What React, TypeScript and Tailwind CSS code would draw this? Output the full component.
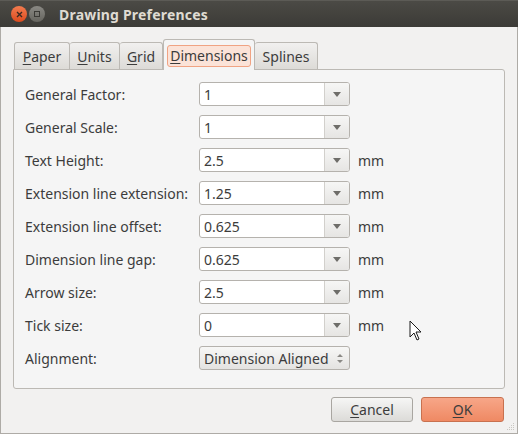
import React from "react";

const rows = [
  { label: "General Factor:", value: "1", unit: false },
  { label: "General Scale:", value: "1", unit: false },
  { label: "Text Height:", value: "2.5", unit: true },
  { label: "Extension line extension:", value: "1.25", unit: true },
  { label: "Extension line offset:", value: "0.625", unit: true },
  { label: "Dimension line gap:", value: "0.625", unit: true },
  { label: "Arrow size:", value: "2.5", unit: true },
  { label: "Tick size:", value: "0", unit: true },
];

function Mn({ c }: { c: string }) {
  return <span className="underline decoration-1 underline-offset-[2px]">{c}</span>;
}

function Combo({ value }: { value: string }) {
  return (
    <div className="flex h-6 w-[151px] overflow-hidden rounded-[3px] border border-[#b5b2ad] bg-white">
      <div className="flex flex-1 items-center pl-[4px] text-[#3c3c3c]">{value}</div>
      <div className="flex w-[25px] items-center justify-center border-l border-[#d2d0cc] bg-gradient-to-b from-[#f6f6f5] to-[#e6e5e3]">
        <svg width="8" height="5" viewBox="0 0 8 5">
          <path d="M0 0h8L4 5z" fill="#6e6d69" />
        </svg>
      </div>
    </div>
  );
}

export default function App() {
  return (
    <div
      className="relative flex h-[434px] w-[518px] flex-col overflow-hidden bg-[#f2f1f0] text-[14px] text-[#3c3c3c]"
      style={{ fontFamily: '"Noto Sans", "DejaVu Sans", sans-serif' }}
    >
      {/* title bar */}
      <div className="flex h-[27px] shrink-0 items-center border-t border-[#5c5b56] bg-gradient-to-b from-[#4b4a45] to-[#3c3b37] pl-[11px]">
        <div className="flex h-4 w-4 items-center justify-center rounded-full bg-gradient-to-b from-[#f27b4e] to-[#dc4a1c]">
          <svg width="7" height="7" viewBox="0 0 7 7">
            <path d="M1 1l5 5M6 1L1 6" stroke="#3a2a22" strokeWidth="1.4" />
          </svg>
        </div>
        <div className="ml-[2px] flex h-4 w-4 items-center justify-center rounded-full bg-gradient-to-b from-[#8a8984] to-[#66655f]">
          <div className="h-[6px] w-[6px] border border-[#3a3935]" />
        </div>
        <div className="ml-[14px] text-[14px] font-bold tracking-[0.2px] text-[#dfdbd2]">Drawing Preferences</div>
      </div>

      <div className="flex flex-1 flex-col border-x border-b border-[#aeaba6] px-[12px]">
        {/* tabs */}
        <div className="mt-[12px] flex h-[30px] items-end pl-px">
          <div className="flex h-[27px] w-[56px] items-center justify-center rounded-t-[3px] border border-b-0 border-[#bcb9b4] bg-gradient-to-b from-[#f1f0ef] to-[#dddbd7]">
            <span><Mn c="P" />aper</span>
          </div>
          <div className="flex h-[27px] w-[50px] items-center justify-center rounded-t-[3px] border border-b-0 border-l-0 border-[#bcb9b4] bg-gradient-to-b from-[#f1f0ef] to-[#dddbd7]">
            <span><Mn c="U" />nits</span>
          </div>
          <div className="flex h-[27px] w-[43px] items-center justify-center rounded-t-[3px] border border-b-0 border-l-0 border-[#bcb9b4] bg-gradient-to-b from-[#f1f0ef] to-[#dddbd7]">
            <span><Mn c="G" />rid</span>
          </div>
          <div className="relative z-10 -mb-px flex h-[31px] w-[92px] items-center justify-center rounded-t-[3px] border border-b-0 border-[#bcb9b4] bg-[#f5f5f5] px-[3px] pt-[1px]">
            <div className="flex h-[22px] w-full items-center justify-center rounded-[3px] border border-[#f0a383] bg-[#fbe3d8]">
              <span><Mn c="D" />imensions</span>
            </div>
          </div>
          <div className="flex h-[27px] w-[63px] items-center justify-center rounded-t-[3px] border border-b-0 border-l-0 border-[#bcb9b4] bg-gradient-to-b from-[#f1f0ef] to-[#dddbd7]">
            <span>Splines</span>
          </div>
        </div>

        {/* panel */}
        <div className="flex h-[320px] flex-col gap-[9px] rounded-b-[3px] rounded-tr-[3px] border border-[#bcb9b4] bg-[#f5f5f5] pl-[11px] pt-[12px]">
          {rows.map((r) => (
            <div key={r.label} className="flex h-6 items-center">
              <div className="w-[174px]">{r.label}</div>
              <Combo value={r.value} />
              {r.unit && <div className="ml-[8px]">mm</div>}
            </div>
          ))}
          <div className="flex h-6 items-center">
            <div className="w-[174px]">Alignment:</div>
            <div className="flex h-6 w-[151px] items-center rounded-[3px] border border-[#b5b2ad] bg-gradient-to-b from-[#f7f7f6] to-[#e4e3e1] pl-[4px] pr-[6px]">
              <span className="flex-1">Dimension Aligned</span>
              <svg width="6" height="11" viewBox="0 0 6 11">
                <path d="M0 4L3 1l3 3zM0 7l3 3 3-3z" fill="#8a8985" />
              </svg>
            </div>
          </div>
        </div>

        {/* buttons */}
        <div className="mt-[8px] flex justify-end gap-[8px] pr-[1px]">
          <div className="flex h-[25px] w-[82px] items-center justify-center rounded-[3px] border border-[#a9a6a1] bg-gradient-to-b from-[#f6f6f5] to-[#dcdbd8]">
            <span><Mn c="C" />ancel</span>
          </div>
          <div className="flex h-[25px] w-[83px] items-center justify-center rounded-[3px] border border-[#c8714f] bg-gradient-to-b from-[#f7a688] to-[#ef8963]">
            <span><Mn c="O" />K</span>
          </div>
        </div>
      </div>

      {/* resize grip */}
      <svg className="absolute bottom-[3px] right-[3px]" width="9" height="9" viewBox="0 0 9 9">
        <g fill="#c9c7c2">
          <rect x="7" y="1" width="1" height="1" />
          <rect x="5" y="3" width="1" height="1" />
          <rect x="7" y="3" width="1" height="1" />
          <rect x="3" y="5" width="1" height="1" />
          <rect x="5" y="5" width="1" height="1" />
          <rect x="7" y="5" width="1" height="1" />
          <rect x="1" y="7" width="1" height="1" />
          <rect x="3" y="7" width="1" height="1" />
          <rect x="5" y="7" width="1" height="1" />
          <rect x="7" y="7" width="1" height="1" />
        </g>
      </svg>

      {/* mouse pointer */}
      <svg className="absolute left-[409px] top-[320px]" width="13" height="21" viewBox="0 0 13 21">
        <path d="M1 1v16l4-4 3 7 2-1-3-7h5z" fill="#fff" stroke="#1a1a1a" strokeWidth="1" strokeLinejoin="round" />
      </svg>
    </div>
  );
}
